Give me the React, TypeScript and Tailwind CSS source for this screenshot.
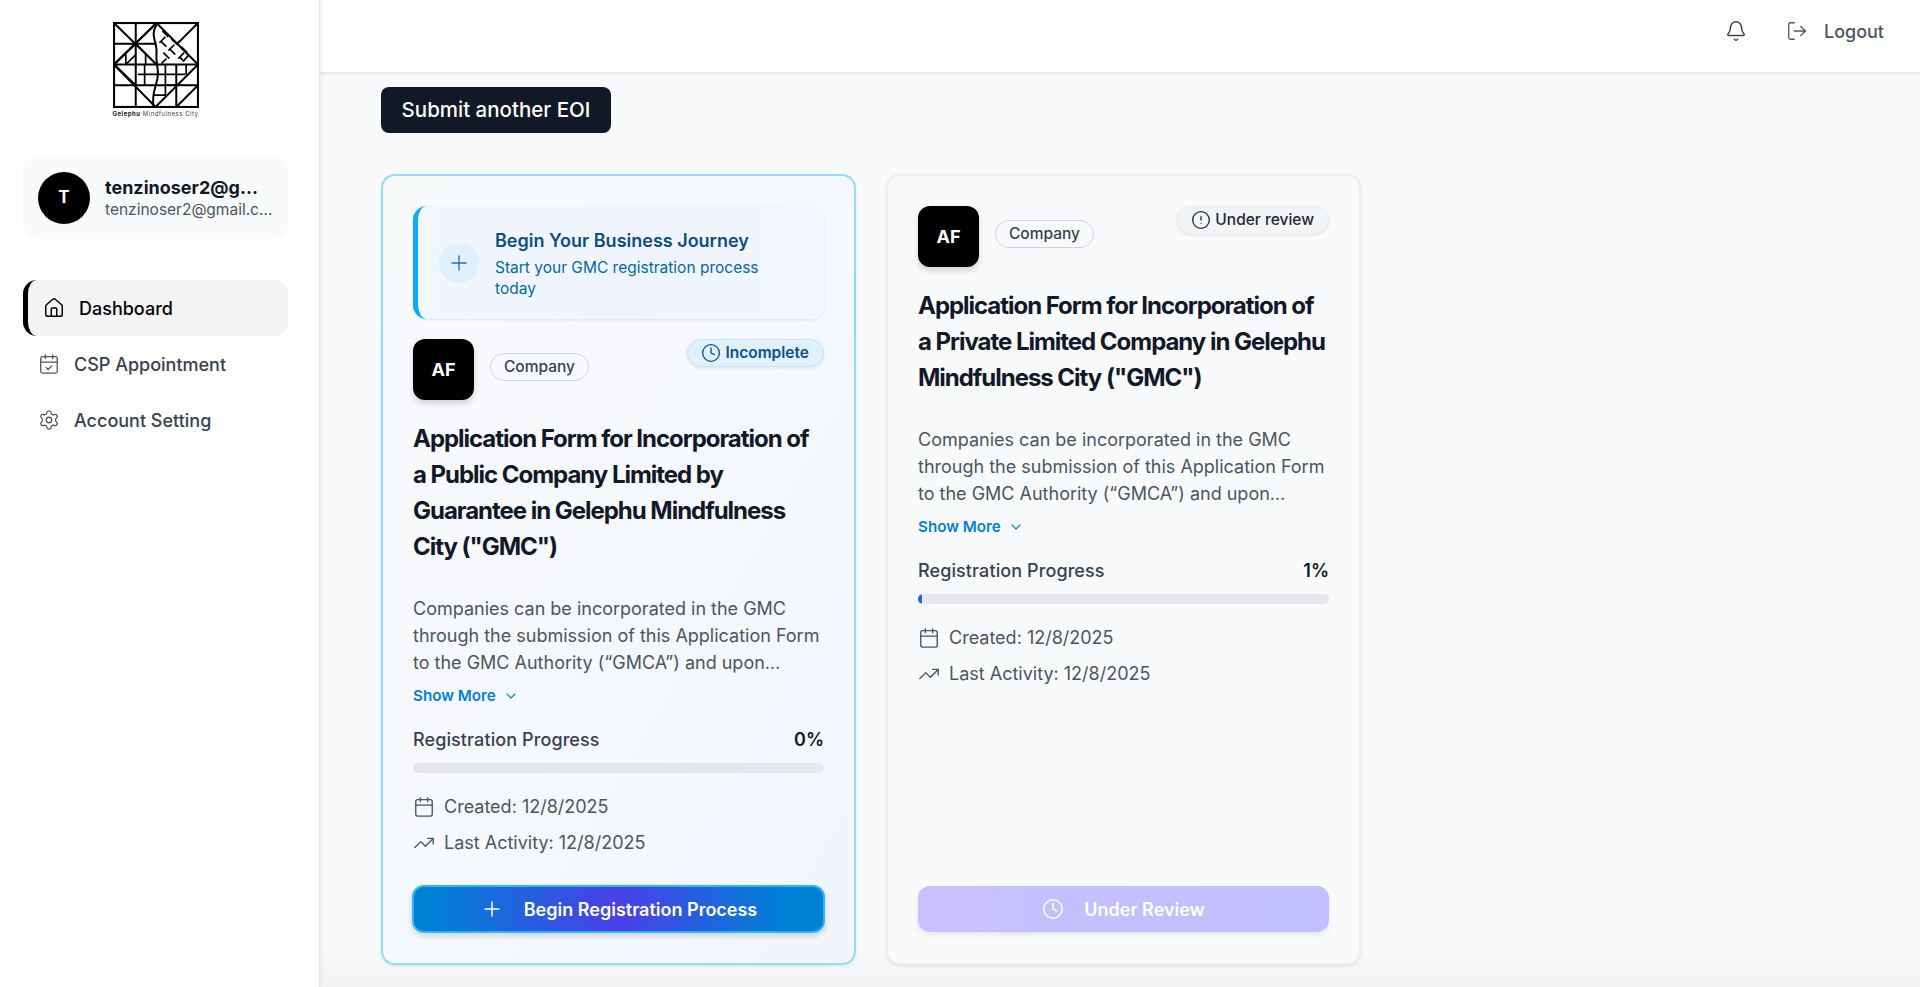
import { Home, CalendarCheck, Settings, Bell, LogOut, Plus, Clock, CircleAlert, Calendar, TrendingUp, ChevronDown } from "lucide-react";

function Logo() {
  return (
    <div className="flex flex-col items-center w-[265px]">
      <svg width="86" height="86" viewBox="-1 -1 87 87" fill="none" stroke="#000" strokeWidth="2">
        <rect x="0" y="0" width="85" height="85" strokeWidth="2.2" />
        <path d="M43 0L85 42L42 85L0 42Z" />
        <path d="M0 42H85M0 63H85M0 21H43M22 0V85M63 42V85" />
        <path d="M0 0L44 43M85 0L64 21M85 63L63 85M43 0L0 42M22 21L43 42M0 42L22 21M22 63L0 42" />
        <path d="M43 2C36 12 44 20 43 30C42 42 46 46 44 56C42 66 38 72 40 84" />
        <path d="M49 8L55 14M52 14L46 20M47 18L53 24M58 16L64 22M61 22L55 28M56 26L62 32M68 24L74 30M71 30L65 36M66 34L71 39M50 30L56 36M53 36L48 41M75 33L70 39" strokeWidth="1.7" />
        <path d="M12 32V42M32 32V42M12 42L22 32M52 42V74M31 42V63M42 52H24M34 52H72M52 63H72M40 73H52M73 42V52" strokeWidth="1.7" />
      </svg>
      <div className="mt-[2px] w-[86px] text-center text-[6px] leading-[8px] tracking-[0.5px] text-[#374151] whitespace-nowrap"><span className="font-bold text-[#111827]">Gelephu</span> Mindfulness City</div>
    </div>
  );
}

function Sidebar() {
  return (
    <aside className="w-[320px] shrink-0 h-full bg-white border-r border-[#e5e7eb] shadow-[2px_0_4px_rgba(0,0,0,0.05)] pl-[23px] pt-[22px] relative z-20">
      <Logo />
      <div className="mt-[39px] h-[82px] w-[265px] rounded-[14px] bg-[#f9fafb] flex items-center pl-[15px] gap-[15px]">
        <div className="w-[52px] h-[52px] shrink-0 rounded-full bg-black text-white flex items-center justify-center font-bold text-[17px]">T</div>
        <div className="min-w-0">
          <div className="truncate w-[155px] font-bold text-[18px] leading-[24px] text-[#111827]">tenzinoser2@gmail.com</div>
          <div className="truncate w-[168px] text-[15.5px] leading-[20px] text-[#4b5563]">tenzinoser2@gmail.com</div>
        </div>
      </div>
      <nav className="mt-[41px] flex flex-col gap-0 w-[265px]">
        <div className="h-[56px] rounded-[14px] bg-[#f3f4f6] border-l-[5px] border-black flex items-center pl-[15px] gap-[14px] text-black font-medium text-[18px]">
          <Home size={22} strokeWidth={1.6} />Dashboard
        </div>
        <div className="h-[56px] flex items-center pl-[15px] gap-[14px] text-[#374151] font-medium text-[18px]">
          <CalendarCheck size={22} strokeWidth={1.4} className="text-[#4b5563]" />CSP Appointment
        </div>
        <div className="h-[56px] flex items-center pl-[15px] gap-[14px] text-[#374151] font-medium text-[18px]">
          <Settings size={22} strokeWidth={1.4} className="text-[#4b5563]" />Account Setting
        </div>
      </nav>
    </aside>
  );
}

function Header() {
  return (
    <header className="h-[73px] shrink-0 bg-white border-b border-[#e5e7eb] shadow-[0_1px_3px_rgba(0,0,0,0.08)] flex items-center justify-end pr-[36px] pb-[10px] relative z-10">
      <Bell size={22} strokeWidth={1.6} className="text-[#374151]" />
      <div className="ml-[39px] flex items-center gap-[16px] text-[#4b5563] font-medium text-[18px]">
        <LogOut size={22} strokeWidth={1.4} />Logout
      </div>
    </header>
  );
}

type CardProps = {
  active?: boolean;
  title: string;
  progress: number;
};

function Card({ active, title, progress }: CardProps) {
  return (
    <div className={"w-[475px] h-[791px] rounded-[14px] border-2 px-[30px] pt-[30px] flex flex-col shadow-[0_1px_3px_rgba(0,0,0,0.1)] " + (active ? "border-[#8fdcff] bg-gradient-to-br from-[#f9fafc] to-[#f2f6fc]" : "border-[#eceef1] bg-[#f9fafc]")}>
      {active && (
        <div className="h-[113px] mb-[20px] rounded-[14px] border-l-[5px] border-[#0ea8ff] bg-gradient-to-r from-[#f1f7fe] via-[#f0f4fe] to-[#f2f8fe] shadow-[0_1px_3px_rgba(0,0,0,0.1)] flex items-center pl-[21px]">
          <div className="w-[40px] h-[40px] rounded-full bg-[#e0f0fe] shrink-0 flex items-center justify-center text-[#1f6fb0]"><Plus size={24} strokeWidth={1.3} /></div>
          <div className="ml-[16px]">
            <div className="text-[18px] leading-[27px] font-semibold text-[#0c4f80]">Begin Your Business Journey</div>
            <div className="text-[15.5px] leading-[21px] mt-[3px] text-[#0369a1] w-[290px]">Start your GMC registration process today</div>
          </div>
        </div>
      )}
      <div className="flex items-start justify-between h-[61px]">
        <div className="flex items-center gap-[16px]">
          <div className="w-[61px] h-[61px] rounded-[12px] bg-black text-white flex items-center justify-center font-bold text-[18px] shadow-[0_4px_6px_rgba(0,0,0,0.15)]">AF</div>
          <div className="h-[28px] -mt-[6px] px-[13px] rounded-full border border-[#d1d5db] text-[#374151] font-medium text-[15.5px] flex items-center">Company</div>
        </div>
        {active ? (
          <div className="h-[28px] pl-[13px] pr-[14px] rounded-full bg-[#e0f0fe] border border-[#c7e5fc] shadow-[0_1px_3px_rgba(0,0,0,0.1)] flex items-center gap-[4px] text-[#0c5289] font-semibold text-[15.5px]">
            <Clock size={20} strokeWidth={1.6} />Incomplete
          </div>
        ) : (
          <div className="h-[28px] pl-[13px] pr-[14px] rounded-full bg-[#f3f4f6] border border-[#eceef1] shadow-[0_1px_3px_rgba(0,0,0,0.1)] flex items-center gap-[4px] text-[#1f2937] font-medium text-[15.5px]">
            <CircleAlert size={20} strokeWidth={1.6} />Under review
          </div>
        )}
      </div>
      <h3 className="mt-[21px] text-[24px] leading-[36px] font-bold tracking-[-1.03px] text-[#111827]">{title}</h3>
      <p className="mt-[30px] text-[18px] leading-[27px] text-[#4b5563] line-clamp-3">Companies can be incorporated in the GMC through the submission of this Application Form to the GMC Authority (“GMCA”) and upon approval, the Authority will issue a certificate of incorporation to the applicant company.</p>
      <div className="mt-[10px] flex items-center gap-[7px] text-[#0080d5] font-semibold text-[15.2px] leading-[20px]">Show More <ChevronDown size={16} strokeWidth={1.6} /></div>
      <div className="mt-[20px] flex justify-between text-[18px] leading-[28px]">
        <span className="font-medium tracking-[0.1px] text-[#374151]">Registration Progress</span>
        <span className="font-semibold text-[#111827]">{progress}%</span>
      </div>
      <div className="mt-[9px] h-[10px] rounded-full bg-[#e5e7eb] overflow-hidden">
        <div className="h-full rounded-full bg-[#2563eb]" style={{ width: `${progress}%` }} />
      </div>
      <div className="mt-[20px] flex items-center gap-[9px] text-[18px] leading-[28px] text-[#4b5563]"><Calendar size={22} strokeWidth={1.5} />Created: 12/8/2025</div>
      <div className="mt-[8px] flex items-center gap-[9px] text-[18px] leading-[28px] text-[#4b5563]"><TrendingUp size={22} strokeWidth={1.5} />Last Activity: 12/8/2025</div>
      {active ? (
        <div className="mt-auto mb-[30px] h-[48px] -mx-[1px] rounded-[12px] border-2 border-[#29b6f6] bg-linear-to-r/srgb from-[#0080d5] from-5% via-[#4a3fe8] to-[#0080d5] to-90% shadow-[0_3px_6px_rgba(0,0,0,0.15)] text-white font-semibold text-[18px] flex items-center justify-center gap-[20px]">
          <Plus size={24} strokeWidth={1.5} />Begin Registration Process
        </div>
      ) : (
        <div className="mt-auto mb-[31px] h-[46px] rounded-[12px] bg-gradient-to-r from-[#c8bfff] to-[#c1bfff] shadow-[0_3px_6px_rgba(0,0,0,0.08)] text-white font-semibold text-[18px] flex items-center justify-center gap-[20px]">
          <Clock size={22} strokeWidth={1.6} />Under Review
        </div>
      )}
    </div>
  );
}

export default function App() {
  return (
    <div className="h-[987px] w-[1920px] flex overflow-hidden bg-[#f9fafb] font-['Inter',sans-serif]">
      <Sidebar />
      <div className="flex-1 flex flex-col min-w-0">
        <Header />
        <main className="flex-1 pl-[61px] pt-[14px] bg-gradient-to-b from-[#f9fafb] from-95% to-[#f3f4f6]">
          <button className="h-[46px] w-[230px] rounded-[8px] bg-[#111827] text-white font-medium text-[20.5px]">Submit another EOI</button>
          <div className="mt-[41px] flex gap-[30px]">
            <Card active title={'Application Form for Incorporation of a Public Company Limited by Guarantee in Gelephu Mindfulness City ("GMC")'} progress={0} />
            <Card title={'Application Form for Incorporation of a Private Limited Company in Gelephu Mindfulness City ("GMC")'} progress={1} />
          </div>
        </main>
      </div>
    </div>
  );
}
